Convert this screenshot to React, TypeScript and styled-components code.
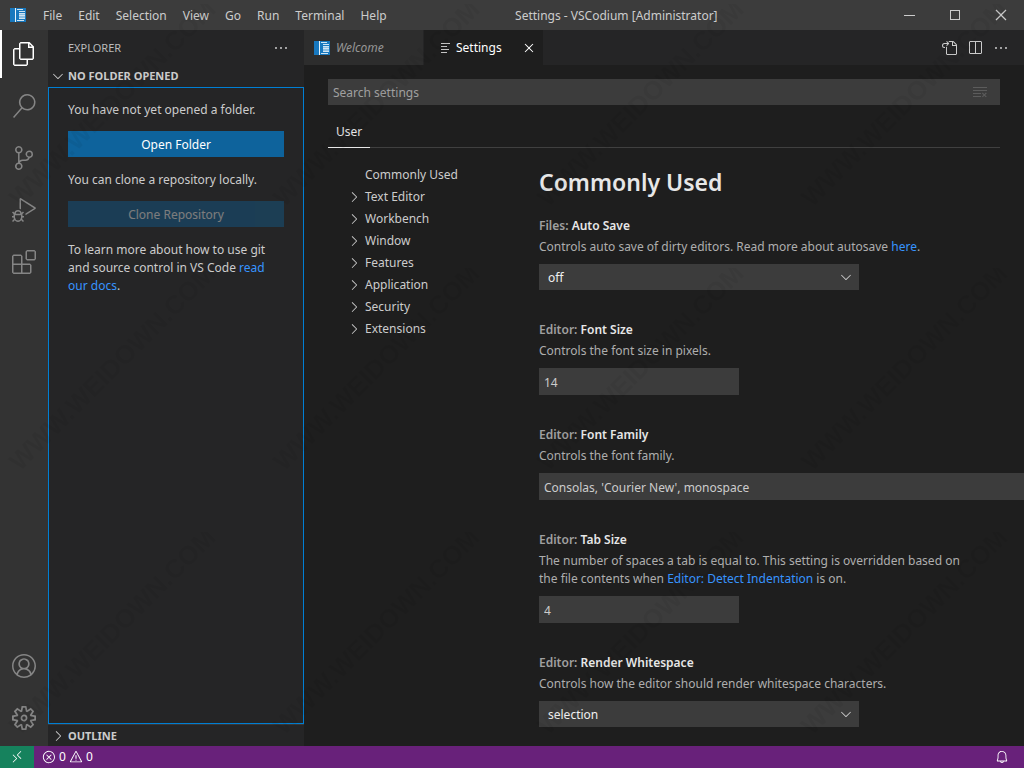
import React from 'react';
import styled, { createGlobalStyle, css } from 'styled-components';
import {
  VscAccount,
  VscBell,
  VscChevronDown,
  VscChevronRight,
  VscChromeClose,
  VscChromeMaximize,
  VscChromeMinimize,
  VscClearAll,
  VscClose,
  VscDebugAlt,
  VscEllipsis,
  VscError,
  VscExtensions,
  VscFiles,
  VscGoToFile,
  VscRemote,
  VscSearch,
  VscSourceControl,
  VscSplitHorizontal,
  VscWarning,
} from 'react-icons/vsc';

const GlobalStyle = createGlobalStyle`
  *, *::before, *::after { box-sizing: border-box; }
  body {
    margin: 0;
    background: #1e1e1e;
    color: #cccccc;
    font: 12px/18px "Noto Sans", "Open Sans", sans-serif;
  }
  button, input, select { font: inherit; color: inherit; border: 0; border-radius: 0; margin: 0; }
  button { background: none; padding: 0; }
  p, h1, h2, h3, ul { margin: 0; padding: 0; }
  svg { display: block; flex: none; }
`;

const Window = styled.div`
  position: relative;
  display: flex;
  flex-direction: column;
  height: 100vh;
  overflow: hidden;
`;

/* Title bar */

const TitleBar = styled.header`
  display: flex;
  align-items: center;
  height: 30px;
  flex: none;
  background: #3c3c3c;
`;

const MenuBar = styled.nav`
  display: flex;
  align-items: center;
  padding-left: 10px;
`;

const MenuItem = styled.button`
  height: 30px;
  padding: 2px 8px 0;
  &:first-of-type { margin-left: 9px; }
`;

const WindowTitle = styled.h1`
  flex: 1;
  padding: 2px 48px 0 0;
  font-size: 12px;
  font-weight: 400;
  text-align: center;
  white-space: nowrap;
`;

const WindowControls = styled.div`
  display: flex;
  justify-content: flex-end;
`;

const WindowButton = styled.button`
  display: grid;
  place-items: center;
  width: 46px;
  height: 30px;
`;

/* Main area */

const Workbench = styled.div`
  display: flex;
  flex: 1;
  min-height: 0;
`;

const ActivityBar = styled.nav`
  display: flex;
  flex-direction: column;
  justify-content: space-between;
  width: 48px;
  flex: none;
  background: #333333;
  padding-bottom: 4px;
`;

const ActivityGroup = styled.div`
  display: flex;
  flex-direction: column;
  gap: 4px;
`;

const ActivityButton = styled.button<{ $active?: boolean }>`
  display: grid;
  place-items: center;
  height: 48px;
  width: 48px;
  padding-right: 2px;
  border-left: 2px solid ${(p) => (p.$active ? '#ffffff' : 'transparent')};
  color: ${(p) => (p.$active ? '#ffffff' : '#858585')};
`;

const Sidebar = styled.aside`
  display: flex;
  flex-direction: column;
  width: 256px;
  flex: none;
  background: #252526;
`;

const SidebarHeader = styled.div`
  display: flex;
  align-items: center;
  justify-content: space-between;
  height: 35px;
  padding: 0 15px 0 20px;
`;

const SidebarTitle = styled.h2`
  font-size: 11px;
  font-weight: 400;
  color: #bbbbbb;
`;

const IconButton = styled.button`
  display: grid;
  place-items: center;
`;

const SectionHeader = styled.button<{ $divided?: boolean }>`
  display: flex;
  align-items: center;
  gap: 2px;
  height: 22px;
  padding-left: 2px;
  font-size: 11px;
  font-weight: 700;
  text-align: left;
  ${(p) =>
    p.$divided &&
    css`
      padding-top: 1px;
      border-top: 1px solid #383838;
    `}
`;

const ExplorerBody = styled.section`
  flex: 1;
  min-height: 0;
  border: 1px solid #007fd4;
  padding: 13px 19px;
`;

const Note = styled.p`
  margin-bottom: 12px;
`;

const WideButton = styled.button`
  display: block;
  width: 100%;
  height: 26px;
  margin-bottom: 14px;
  padding-top: 2px;
  background: #0e639c;
  color: #ffffff;
  &:disabled {
    opacity: 0.4;
  }
`;

const Link = styled.a`
  color: #3794ff;
  text-decoration: none;
`;

/* Editor */

const Editor = styled.main`
  display: flex;
  flex-direction: column;
  flex: 1;
  min-width: 0;
  background: #1e1e1e;
`;

const TabBar = styled.div`
  display: flex;
  height: 35px;
  flex: none;
  background: #252526;
`;

const Tab = styled.button<{ $active?: boolean }>`
  display: flex;
  align-items: center;
  width: 120px;
  gap: 6px;
  padding-left: 10px;
  border-right: 1px solid #252526;
  background: ${(p) => (p.$active ? '#1e1e1e' : '#2d2d2d')};
  color: ${(p) => (p.$active ? '#ffffff' : '#969696')};
  ${(p) =>
    p.$active
      ? css`
          padding: 0 6px 0 16px;
          svg:last-child { margin-left: auto; }
        `
      : css`
          font-style: italic;
        `}
`;

const TabActions = styled.div`
  display: flex;
  align-items: center;
  gap: 10px;
  margin-left: auto;
  padding-right: 15px;
`;

const SettingsHeader = styled.div`
  padding: 14px 24px 0;
`;

const SearchBox = styled.div`
  display: flex;
  align-items: center;
  height: 26px;
  padding-right: 12px;
  background: #3c3c3c;
  color: #5c5c5c;
`;

const SearchInput = styled.input`
  flex: 1;
  min-width: 0;
  height: 26px;
  padding: 0 5px;
  background: none;
  color: #cccccc;
  &::placeholder { color: #a0a0a0; opacity: 1; }
`;

const ScopeBar = styled.div`
  display: flex;
  height: 32px;
  margin-top: 11px;
  border-bottom: 1px solid #404040;
`;

const ScopeTab = styled.button`
  height: 32px;
  padding: 0 8px;
  border-bottom: 1px solid #e7e7e7;
  color: #e7e7e7;
`;

const SettingsBody = styled.div`
  display: flex;
  flex: 1;
  min-height: 0;
  padding-left: 24px;
  overflow: hidden;
`;

const Toc = styled.nav`
  width: 211px;
  flex: none;
  padding: 16px 0 0 18px;
`;

const TocItem = styled.button<{ $leaf?: boolean }>`
  display: flex;
  align-items: center;
  gap: 3px;
  width: 100%;
  height: 22px;
  padding-left: ${(p) => (p.$leaf ? 19 : 0)}px;
`;

const SettingsList = styled.div`
  flex: 1;
  min-width: 0;
  padding-top: 18px;
`;

const GroupTitle = styled.h2`
  margin-bottom: 19px;
  font-size: 23px;
  line-height: 32px;
  font-weight: 600;
  color: #e7e7e7;
`;

const Setting = styled.section`
  margin-bottom: 31px;
`;

const SettingLabel = styled.label`
  display: block;
  margin-bottom: 3px;
  font-weight: 600;
  color: #a0a0a0;
  b { font-weight: 600; color: #e7e7e7; }
`;

const Description = styled.p`
  max-width: 440px;
  margin-bottom: 8px;
  color: #aeaeae;
`;

const TextField = styled.input<{ $wide?: boolean }>`
  display: block;
  width: ${(p) => (p.$wide ? 500 : 200)}px;
  height: 27px;
  padding: 2px 5px 0;
  background: #3c3c3c;
`;

const SelectBox = styled.div`
  display: grid;
  align-items: center;
  width: 320px;
  svg {
    grid-area: 1 / 1;
    justify-self: end;
    margin-right: 5px;
    pointer-events: none;
  }
`;

const SelectField = styled.select`
  grid-area: 1 / 1;
  width: 100%;
  height: 26px;
  padding: 2px 9px 0;
  appearance: none;
  background: #3c3c3c;
  color: #f0f0f0;
`;

/* Status bar */

const StatusBar = styled.footer`
  display: flex;
  align-items: center;
  height: 22px;
  flex: none;
  padding-right: 15px;
  background: #68217a;
  color: #ffffff;
`;

const RemoteButton = styled.button`
  display: grid;
  place-items: center;
  width: 34px;
  height: 22px;
  background: #16825d;
`;

const Problems = styled.button`
  display: flex;
  align-items: center;
  gap: 3px;
  padding-left: 8px;
`;

const Notifications = styled(IconButton)`
  margin-left: auto;
`;

/* Repeating diagonal watermark over the whole window */

const Watermark = styled.svg`
  position: absolute;
  inset: 0;
  width: 100%;
  height: 100%;
  pointer-events: none;
`;

const AppLogo = () => (
  <svg width="16" height="16" viewBox="0 0 16 16" aria-hidden="true">
    <rect width="16" height="14" y="1" fill="#1878be" />
    <path d="M5.5 1v14" stroke="#e8f3fa" />
    <path d="M7 2.5h6M9 4.5h6M7 13.5h7" stroke="#cfe4f3" />
    <path d="M9 6h6v5H9z" fill="#8fbfe2" />
    <path d="M9 6.5h6M9 8.5h6M9 11.5h6" stroke="#cfe4f3" />
  </svg>
);

const SettingsFileIcon = () => (
  <svg width="10" height="12" viewBox="0 0 10 12" aria-hidden="true">
    <path d="M1 1.5h9M1 4.5h6M1 7.5h8M1 10.5h6" stroke="#c5c5c5" />
  </svg>
);

const GearIcon = () => (
  <svg width="24" height="24" viewBox="0 0 24 24" fill="currentColor" aria-hidden="true">
    <path
      fillRule="evenodd"
      clipRule="evenodd"
      d="M19.85 8.75l4.15.83v4.84l-4.15.83 2.35 3.52-3.43 3.43-3.52-2.35-.83 4.15H9.58l-.83-4.15-3.52 2.35-3.43-3.43 2.35-3.52L0 14.42V9.58l4.15-.83L1.8 5.23 5.23 1.8l3.52 2.35L9.58 0h4.84l.83 4.15 3.52-2.35 3.43 3.43-2.35 3.52zm-1.57 5.07l4-.81v-2l-4-.81-.54-1.3 2.29-3.43-1.43-1.43-3.43 2.29-1.3-.54-.81-4h-2l-.81 4-1.3.54-3.43-2.29-1.43 1.43L6.38 8.9l-.54 1.3-4 .81v2l4 .81.54 1.3-2.29 3.43 1.43 1.43 3.43-2.29 1.3.54.81 4h2l.81-4 1.3-.54 3.43 2.29 1.43-1.43-2.29-3.43.54-1.3zm-8.186-4.672A3.43 3.43 0 0 1 12 8.57 3.44 3.44 0 0 1 15.43 12a3.43 3.43 0 1 1-5.336-2.852zm.956 4.274c.281.188.612.288.95.288A1.7 1.7 0 0 0 13.71 12a1.71 1.71 0 1 0-2.66 1.422z"
    />
  </svg>
);

const menus = ['File', 'Edit', 'Selection', 'View', 'Go', 'Run', 'Terminal', 'Help'];

const tocEntries = ['Text Editor', 'Workbench', 'Window', 'Features', 'Application', 'Security', 'Extensions'];

const activities = [
  { label: 'Explorer', Icon: VscFiles },
  { label: 'Search', Icon: VscSearch },
  { label: 'Source Control', Icon: VscSourceControl },
  { label: 'Run', Icon: VscDebugAlt },
  { label: 'Extensions', Icon: VscExtensions },
];

type SettingItem = {
  id: string;
  category: string;
  name: string;
  description: React.ReactNode;
  value: string;
  kind: 'select' | 'text' | 'wide';
};

const settings: SettingItem[] = [
  {
    id: 'auto-save',
    category: 'Files:',
    name: 'Auto Save',
    description: (
      <>
        Controls auto save of dirty editors. Read more about autosave <Link href="#autosave">here</Link>.
      </>
    ),
    value: 'off',
    kind: 'select',
  },
  {
    id: 'font-size',
    category: 'Editor:',
    name: 'Font Size',
    description: 'Controls the font size in pixels.',
    value: '14',
    kind: 'text',
  },
  {
    id: 'font-family',
    category: 'Editor:',
    name: 'Font Family',
    description: 'Controls the font family.',
    value: "Consolas, 'Courier New', monospace",
    kind: 'wide',
  },
  {
    id: 'tab-size',
    category: 'Editor:',
    name: 'Tab Size',
    description: (
      <>
        The number of spaces a tab is equal to. This setting is overridden based on the file contents when{' '}
        <Link href="#detect-indentation">Editor: Detect Indentation</Link> is on.
      </>
    ),
    value: '4',
    kind: 'text',
  },
  {
    id: 'render-whitespace',
    category: 'Editor:',
    name: 'Render Whitespace',
    description: 'Controls how the editor should render whitespace characters.',
    value: 'selection',
    kind: 'select',
  },
];

export default function App() {
  return (
    <Window>
      <GlobalStyle />
      <TitleBar>
        <MenuBar aria-label="Application menu">
          <AppLogo />
          {menus.map((name) => (
            <MenuItem key={name}>{name}</MenuItem>
          ))}
        </MenuBar>
        <WindowTitle>Settings - VSCodium [Administrator]</WindowTitle>
        <WindowControls>
          <WindowButton aria-label="Minimize"><VscChromeMinimize size={16} /></WindowButton>
          <WindowButton aria-label="Maximize"><VscChromeMaximize size={16} /></WindowButton>
          <WindowButton aria-label="Close"><VscChromeClose size={16} /></WindowButton>
        </WindowControls>
      </TitleBar>

      <Workbench>
        <ActivityBar aria-label="Views">
          <ActivityGroup>
            {activities.map(({ label, Icon }, i) => (
              <ActivityButton key={label} aria-label={label} $active={i === 0}>
                <Icon size={24} />
              </ActivityButton>
            ))}
          </ActivityGroup>
          <ActivityGroup>
            <ActivityButton aria-label="Accounts"><VscAccount size={24} /></ActivityButton>
            <ActivityButton aria-label="Manage"><GearIcon /></ActivityButton>
          </ActivityGroup>
        </ActivityBar>

        <Sidebar>
          <SidebarHeader>
            <SidebarTitle>EXPLORER</SidebarTitle>
            <IconButton aria-label="More actions"><VscEllipsis size={16} /></IconButton>
          </SidebarHeader>
          <SectionHeader aria-expanded="true">
            <VscChevronDown size={16} />
            NO FOLDER OPENED
          </SectionHeader>
          <ExplorerBody>
            <Note>You have not yet opened a folder.</Note>
            <WideButton>Open Folder</WideButton>
            <Note>You can clone a repository locally.</Note>
            <WideButton disabled>Clone Repository</WideButton>
            <Note>
              To learn more about how to use git and source control in VS Code <Link href="#docs">read our docs</Link>.
            </Note>
          </ExplorerBody>
          <SectionHeader aria-expanded="false" $divided>
            <VscChevronRight size={16} />
            OUTLINE
          </SectionHeader>
        </Sidebar>

        <Editor>
          <TabBar>
            <Tab>
              <AppLogo />
              Welcome
            </Tab>
            <Tab $active>
              <SettingsFileIcon />
              Settings
              <VscClose size={16} />
            </Tab>
            <TabActions>
              <IconButton aria-label="Open Settings (JSON)"><VscGoToFile size={16} /></IconButton>
              <IconButton aria-label="Split editor"><VscSplitHorizontal size={16} /></IconButton>
              <IconButton aria-label="More actions"><VscEllipsis size={16} /></IconButton>
            </TabActions>
          </TabBar>
          <SettingsHeader>
            <SearchBox>
              <SearchInput type="text" aria-label="Search settings" placeholder="Search settings" />
              <IconButton aria-label="Clear search"><VscClearAll size={16} /></IconButton>
            </SearchBox>
            <ScopeBar>
              <ScopeTab>User</ScopeTab>
            </ScopeBar>
          </SettingsHeader>
          <SettingsBody>
            <Toc aria-label="Settings categories">
              <TocItem $leaf>Commonly Used</TocItem>
              {tocEntries.map((name) => (
                <TocItem key={name}>
                  <VscChevronRight size={16} />
                  {name}
                </TocItem>
              ))}
            </Toc>
            <SettingsList>
              <GroupTitle>Commonly Used</GroupTitle>
              {settings.map((s) => (
                <Setting key={s.id}>
                  <SettingLabel htmlFor={s.id}>
                    {s.category} <b>{s.name}</b>
                  </SettingLabel>
                  <Description>{s.description}</Description>
                  {s.kind === 'select' ? (
                    <SelectBox>
                      <SelectField id={s.id} defaultValue={s.value}>
                        <option value={s.value}>{s.value}</option>
                      </SelectField>
                      <VscChevronDown size={16} />
                    </SelectBox>
                  ) : (
                    <TextField id={s.id} type="text" defaultValue={s.value} $wide={s.kind === 'wide'} />
                  )}
                </Setting>
              ))}
            </SettingsList>
          </SettingsBody>
        </Editor>
      </Workbench>

      <StatusBar>
        <RemoteButton aria-label="Open a remote window"><VscRemote size={14} /></RemoteButton>
        <Problems>
          <VscError size={14} />0<VscWarning size={14} />0
        </Problems>
        <Notifications aria-label="Notifications"><VscBell size={14} /></Notifications>
      </StatusBar>

      <Watermark aria-hidden="true">
        <defs>
          <pattern id="watermark" width="264" height="264" y="4" patternUnits="userSpaceOnUse">
            <text
              transform="translate(20 204) rotate(-45)"
              fontFamily="Liberation Sans, sans-serif"
              fontSize="26"
              fontWeight="700"
              fill="#000000"
              fillOpacity="0.05"
            >
              WWW.WEIDOWN.COM
            </text>
          </pattern>
        </defs>
        <rect width="100%" height="100%" fill="url(#watermark)" />
      </Watermark>
    </Window>
  );
}
